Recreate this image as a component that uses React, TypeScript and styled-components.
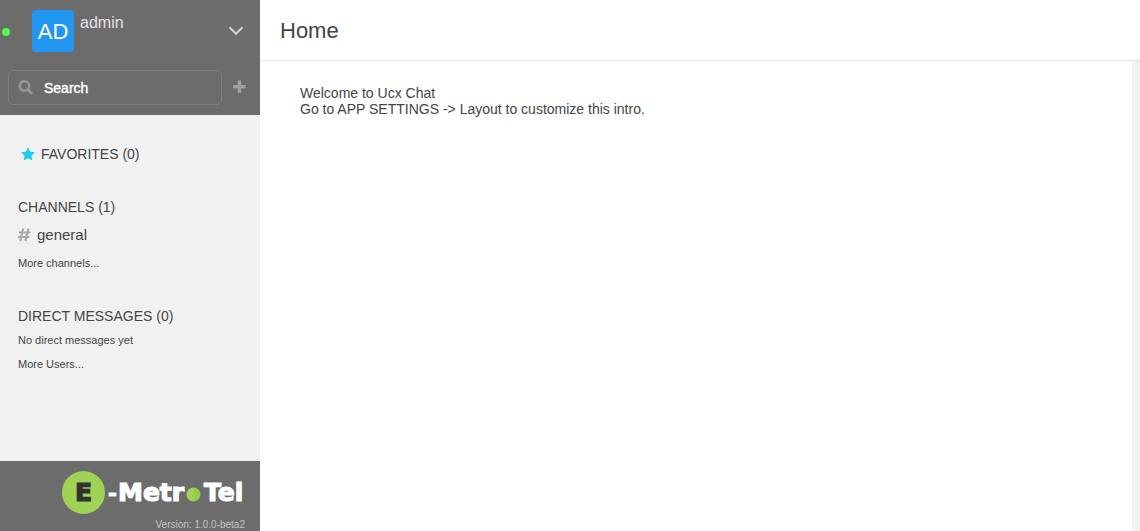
import React from "react";
import styled, { createGlobalStyle } from "styled-components";

const GlobalStyle = createGlobalStyle`
  *, *::before, *::after { box-sizing: border-box; }
  body {
    margin: 0;
    font-family: "Liberation Sans", Arial, sans-serif;
    font-size: 14px;
    line-height: 16px;
    color: #444;
    background: #fff;
  }
  h1, h2, p, ul { margin: 0; padding: 0; font-weight: 400; }
  ul { list-style: none; }
  button { border: 0; padding: 0; background: none; font: inherit; cursor: pointer; }
  a { color: inherit; text-decoration: none; }
`;

const Page = styled.div`
  display: flex;
  min-height: 100vh;
`;

const Sidebar = styled.aside`
  display: flex;
  flex-direction: column;
  flex: 0 0 260px;
  min-width: 0;
  background: #f1f1f1;
`;

const SidebarHeader = styled.header`
  background: #6c6c6c;
  padding-bottom: 10px;
`;

const Account = styled.div`
  display: flex;
  align-items: flex-start;
  height: 70px;
  padding: 10px 16px 0 2px;
`;

const Status = styled.span`
  width: 8px;
  height: 8px;
  margin: 18px 22px 0 0;
  border-radius: 50%;
  background: #4dff4d;
`;

const Avatar = styled.div`
  width: 42px;
  height: 42px;
  border-radius: 4px;
  background: #2196f3;
  color: #fff;
  font-size: 22px;
  line-height: 43px;
  text-align: center;
`;

const UserName = styled.span`
  flex: 1;
  padding: 4px 0 0 6px;
  color: #e4e4e4;
  font-size: 16px;
  line-height: 18px;
`;

const MenuButton = styled.button`
  display: flex;
  margin-top: 16px;
  color: #d3d3d3;
`;

const SearchRow = styled.div`
  display: flex;
  align-items: center;
  padding: 0 14px 0 8px;
`;

const SearchField = styled.label`
  display: flex;
  align-items: center;
  flex: 1;
  min-width: 0;
  height: 35px;
  padding-left: 9px;
  border: 1px solid #808080;
  border-radius: 5px;
  color: #989898;
`;

const SearchInput = styled.input`
  flex: 1;
  width: 100%;
  min-width: 0;
  padding: 0;
  margin-left: 11px;
  border: 0;
  outline: 0;
  background: transparent;
  color: #fff;
  font: 14px "Liberation Sans", Arial, sans-serif;
  -webkit-text-stroke: 0.4px #fff;
  &::placeholder { color: #fff; opacity: 1; }
`;

const AddButton = styled.button`
  display: flex;
  margin-left: 11px;
  color: #a0a0a0;
`;

const Rooms = styled.nav`
  flex: 1;
  padding: 30px 18px;
`;

const Section = styled.section`
  margin-bottom: 35px;
`;

const SectionTitle = styled.h2`
  display: flex;
  align-items: center;
  gap: 6px;
  font-size: 14px;
  line-height: 18px;
  svg { margin-left: 3px; color: #1dc8f2; }
`;

const Channel = styled.a`
  display: flex;
  align-items: center;
  gap: 6px;
  padding: 11px 0 5px;
  font-size: 15px;
  svg { color: #aaa; }
`;

const Small = styled.p`
  padding-top: 7px;
  font-size: 11px;
  line-height: 17px;
`;

const Footer = styled.footer`
  display: flex;
  flex-direction: column;
  align-items: flex-end;
  padding: 10px 15px 0;
  background: #6c6c6c;
`;

const Logo = styled.svg`
  display: block;
  font-family: "DejaVu Sans", Verdana, sans-serif;
  font-weight: 700;
`;

const Version = styled.p`
  margin-top: 4px;
  color: #c4c4c4;
  font-size: 10px;
  line-height: 12px;
`;

const Main = styled.main`
  display: flex;
  flex-direction: column;
  flex: 1;
  min-width: 0;
`;

const TitleBar = styled.header`
  padding: 18px 20px 17px;
  border-bottom: 1px solid #e5e5e5;
`;

const Title = styled.h1`
  font-size: 22px;
  line-height: 25px;
`;

const Content = styled.div`
  flex: 1;
  padding: 24px 40px;
  border-right: 8px solid #f1f1f1;
`;

const SearchIcon = () => (
  <svg width="15" height="15" viewBox="0 0 15 15" fill="none" stroke="currentColor">
    <circle cx="6.500" cy="6" r="4.800" strokeWidth="2.400" />
    <path d="m10 9.600 3.200 3.200" strokeWidth="3" strokeLinecap="round" />
  </svg>
);

const PlusIcon = () => (
  <svg width="13" height="15" viewBox="0 0 13 15" fill="none" stroke="currentColor" strokeWidth="3.400">
    <path d="M6.500 .5v12.500M.2 6.800h12.600" />
  </svg>
);

const StarIcon = () => (
  <svg width="14" height="15" viewBox="0 0 14 15" fill="currentColor">
    <path d="m7 .2 2.100 4.500 4.900.6-3.600 3.400 1 4.900L7 11.200 2.600 13.600l1-4.900L0 5.300l4.900-.6z" />
  </svg>
);

const HashIcon = () => (
  <svg width="13" height="14" viewBox="0 0 13 14" fill="none" stroke="currentColor" strokeWidth="2.200">
    <path d="M5.200.5 2.200 13M10.400.5 7.400 13M1 4.500h11.500M0 9h11.500" />
  </svg>
);

export default function App() {
  return (
    <Page>
      <GlobalStyle />
      <Sidebar>
        <SidebarHeader>
          <Account>
            <Status />
            <Avatar>AD</Avatar>
            <UserName>admin</UserName>
            <MenuButton aria-label="Account menu">
              <svg width="16" height="10" viewBox="0 0 16 10" fill="none" stroke="currentColor" strokeWidth="2">
                <path d="M1.500 1.200 8 7.800l6.500-6.600" />
              </svg>
            </MenuButton>
          </Account>
          <SearchRow>
            <SearchField>
              <SearchIcon />
              <SearchInput type="text" placeholder="Search" aria-label="Search" />
            </SearchField>
            <AddButton aria-label="Create channel">
              <PlusIcon />
            </AddButton>
          </SearchRow>
        </SidebarHeader>
        <Rooms>
          <Section>
            <SectionTitle><StarIcon />FAVORITES (0)</SectionTitle>
          </Section>
          <Section>
            <SectionTitle>CHANNELS (1)</SectionTitle>
            <ul>
              <li><Channel href="#general"><HashIcon />general</Channel></li>
            </ul>
            <Small><a href="#channels">More channels...</a></Small>
          </Section>
          <Section>
            <SectionTitle>DIRECT MESSAGES (0)</SectionTitle>
            <Small>No direct messages yet</Small>
            <Small><a href="#users">More Users...</a></Small>
          </Section>
        </Rooms>
        <Footer>
          <Logo width="183" height="44" viewBox="0 0 183 44" role="img" aria-label="E-MetroTel">
            <defs>
              <linearGradient id="ball">
                <stop offset="0" stopColor="#aed45c" />
                <stop offset="1" stopColor="#8acb48" />
              </linearGradient>
            </defs>
            <circle cx="21.500" cy="21.500" r="21.500" fill="#a0d255" />
            <text x="13" y="30" fontSize="25" fill="#303030" stroke="#303030" strokeWidth="1.200">E</text>
            <g fill="#fff" stroke="#fff" fontSize="25" strokeWidth="1.200">
              <path d="M46.500 23.500h8" strokeWidth="4" />
              <text x="56" y="30">Metr</text>
              <text x="142" y="30">Tel</text>
            </g>
            <circle cx="131.500" cy="23.500" r="7" fill="url(#ball)" />
          </Logo>
          <Version>Version: 1.0.0-beta2</Version>
        </Footer>
      </Sidebar>
      <Main>
        <TitleBar><Title>Home</Title></TitleBar>
        <Content>
          <p>Welcome to Ucx Chat</p>
          <p>Go to APP SETTINGS -&gt; Layout to customize this intro.</p>
        </Content>
      </Main>
    </Page>
  );
}
